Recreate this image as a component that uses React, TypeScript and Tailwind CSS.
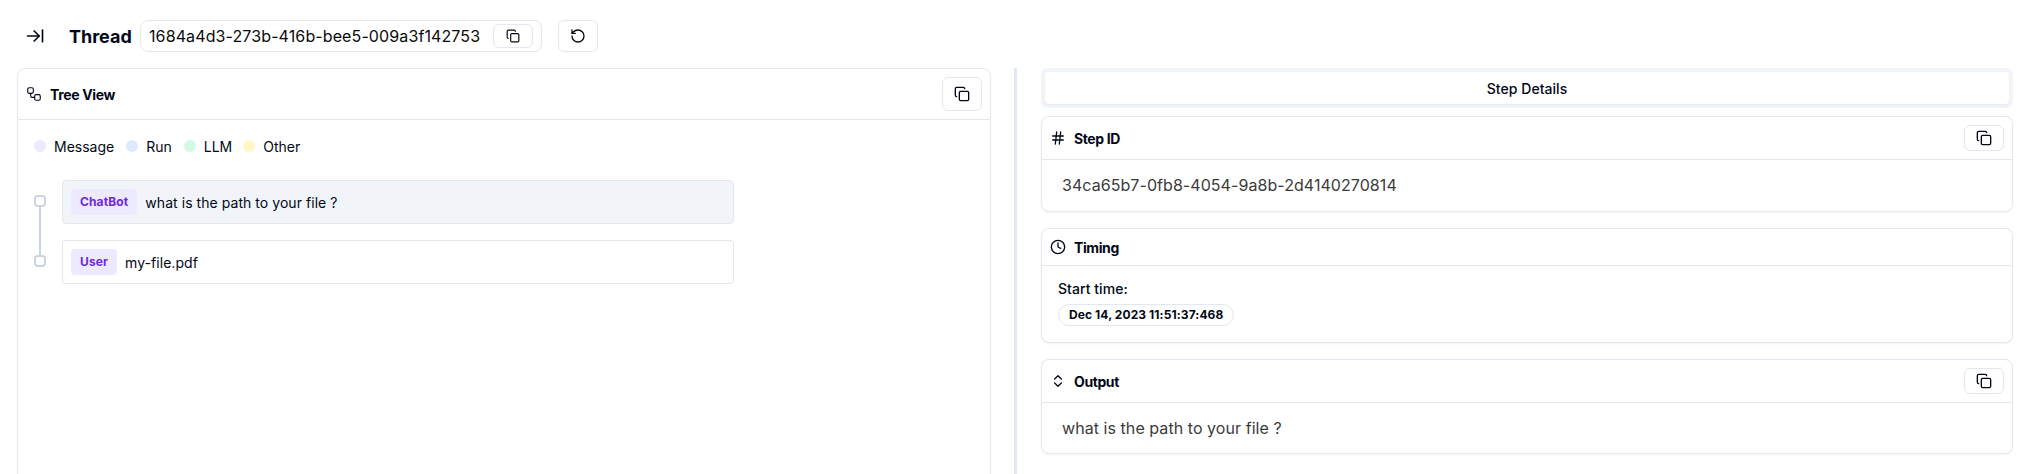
import type { ReactNode } from "react";
import { ArrowRightToLine, ChevronsUpDown, Clock, Copy, Hash, RotateCcw } from "lucide-react";

function TreeIcon() {
  return (
    <svg width="16" height="16" viewBox="0 0 24 24" fill="none" stroke="currentColor" strokeWidth="1.7" strokeLinecap="round" strokeLinejoin="round">
      <rect width="8.4" height="8.4" x="2.6" y="2.6" rx="2.2" />
      <path d="M7 11v4a2 2 0 0 0 2 2h4" />
      <rect width="8.4" height="8.4" x="13" y="13" rx="2.2" />
    </svg>
  );
}

function CopyButton({ className }: { className: string }) {
  return (
    <button className={`flex w-10 items-center justify-center rounded-md border border-[#e2e8f0] bg-white ${className}`}>
      <Copy size={16} />
    </button>
  );
}

function Card({ icon, title, copy, children }: { icon: ReactNode; title: string; copy?: boolean; children: ReactNode }) {
  return (
    <section className="rounded-lg border border-[#e2e8f0] bg-white shadow-[0_1px_2px_0_rgb(0_0_0/0.05)]">
      <div className="flex items-center justify-between border-b border-[#e5e7eb] p-2">
        <div className="flex items-center gap-2">
          {icon}
          <h3 className="pt-px text-sm leading-[19px] font-bold tracking-[-0.4px]">{title}</h3>
        </div>
        {copy && <CopyButton className="h-[26px]" />}
      </div>
      {children}
    </section>
  );
}

const legend = [
  { label: "Message", color: "bg-[#ede9fe]" },
  { label: "Run", color: "bg-[#dbeafe]" },
  { label: "LLM", color: "bg-[#d1fae5]" },
  { label: "Other", color: "bg-[#fef9c3]" },
];

const node = "size-3 rounded border-2 border-[#cbd5e1]";

function Step({ name, text, active }: { name: string; text: string; active?: boolean }) {
  return (
    <div className={`flex h-11 w-[672px] items-center gap-2 rounded border border-[#e5e7eb] px-2 ${active ? "bg-[#f1f5f9]" : "bg-white"}`}>
      <span className="flex h-[26px] items-center rounded bg-[#ede9fe] px-[9px] text-xs font-bold tracking-[0.13px] text-[#6d28d9]">{name}</span>
      <span className="pt-px text-sm tracking-[0.05px]">{text}</span>
    </div>
  );
}

export default function App() {
  return (
    <div className="flex h-[474px] flex-col overflow-hidden bg-white font-['Inter',sans-serif] text-[#020817]">
      <header className="flex h-[68px] shrink-0 items-start pt-5 pl-[25px]">
        <div className="flex h-8 w-[107px] items-center">
          <ArrowRightToLine size={20} />
          <h1 className="ml-6 pt-px text-lg font-bold">Thread</h1>
        </div>
        <div className="ml-2 flex h-8 w-[402px] items-center justify-between rounded-lg border border-[#e5e7eb] pr-2 pl-2 text-[#0a0a0a]">
          <span className="text-base tracking-[0.11px]">1684a4d3-273b-416b-bee5-009a3f142753</span>
          <button className="flex h-6 w-10 items-center justify-center rounded-md border border-[#e2e8f0]">
            <Copy size={14} />
          </button>
        </div>
        <button className="ml-4 flex h-8 w-10 items-center justify-center rounded-md border border-[#e2e8f0] text-[#0a0a0a]">
          <RotateCcw size={16} />
        </button>
      </header>
      <main className="flex min-h-0 grow pr-[14px] pl-[17px]">
        <section className="h-[500px] w-[974px] shrink-0 rounded-lg border border-[#e2e8f0]">
          <div className="flex items-center justify-between border-b border-[#e5e7eb] p-2">
            <div className="flex items-center gap-2">
              <TreeIcon />
              <h2 className="pt-px text-sm font-bold tracking-[-0.35px]">Tree View</h2>
            </div>
            <CopyButton className="h-[34px]" />
          </div>
          <div className="flex gap-3 px-4 pt-4">
            {legend.map((item) => (
              <div key={item.label} className="flex items-center gap-2 text-sm last:-ml-px">
                <span className={`size-3 rounded-full ${item.color}`} />
                <span className="pt-px leading-[19px]">{item.label}</span>
              </div>
            ))}
          </div>
          <div className="flex gap-4 px-4 pt-6">
            <div className="flex flex-col items-center pt-[15px]">
              <span className={node} />
              <span className="h-12 w-0.5 bg-[#cbd5e1]" />
              <span className={node} />
            </div>
            <div className="flex flex-col gap-4">
              <Step name="ChatBot" text="what is the path to your file ?" active />
              <Step name="User" text="my-file.pdf" />
            </div>
          </div>
        </section>
        <div className="ml-[23px] w-[3px] shrink-0 bg-[#e2e8f0]" />
        <aside className="ml-6 flex h-[500px] grow flex-col">
          <div className="mb-2 flex h-10 shrink-0 rounded-md bg-[#f1f5f9] p-1">
            <div className="flex grow items-center justify-center rounded-sm bg-white pt-px text-sm font-medium tracking-[0.05px] shadow-[0_1px_2px_0_rgb(0_0_0/0.05)]">Step Details</div>
          </div>
          <div className="flex flex-col gap-4">
            <Card icon={<Hash size={16} />} title="Step ID" copy>
              <p className="h-[51px] px-5 pt-[13px] text-base tracking-[0.06px] text-[#3b3b3b]">34ca65b7-0fb8-4054-9a8b-2d4140270814</p>
            </Card>
            <Card icon={<Clock size={16} />} title="Timing">
              <div className="flex h-[76px] flex-col items-start px-4 pt-[13px]">
                <p className="text-sm font-medium tracking-[0.05px]">Start time:</p>
                <span className="mt-[5px] flex h-[22px] items-center rounded-full border border-[#e2e8f0] px-2.5 text-xs font-bold tracking-[0.09px]">Dec 14, 2023 11:51:37:468</span>
              </div>
            </Card>
            <Card icon={<ChevronsUpDown size={16} />} title="Output" copy>
              <p className="h-[50px] px-5 pt-[13px] text-base tracking-[0.06px] text-[#3b3b3b]">what is the path to your file ?</p>
            </Card>
          </div>
        </aside>
      </main>
    </div>
  );
}
